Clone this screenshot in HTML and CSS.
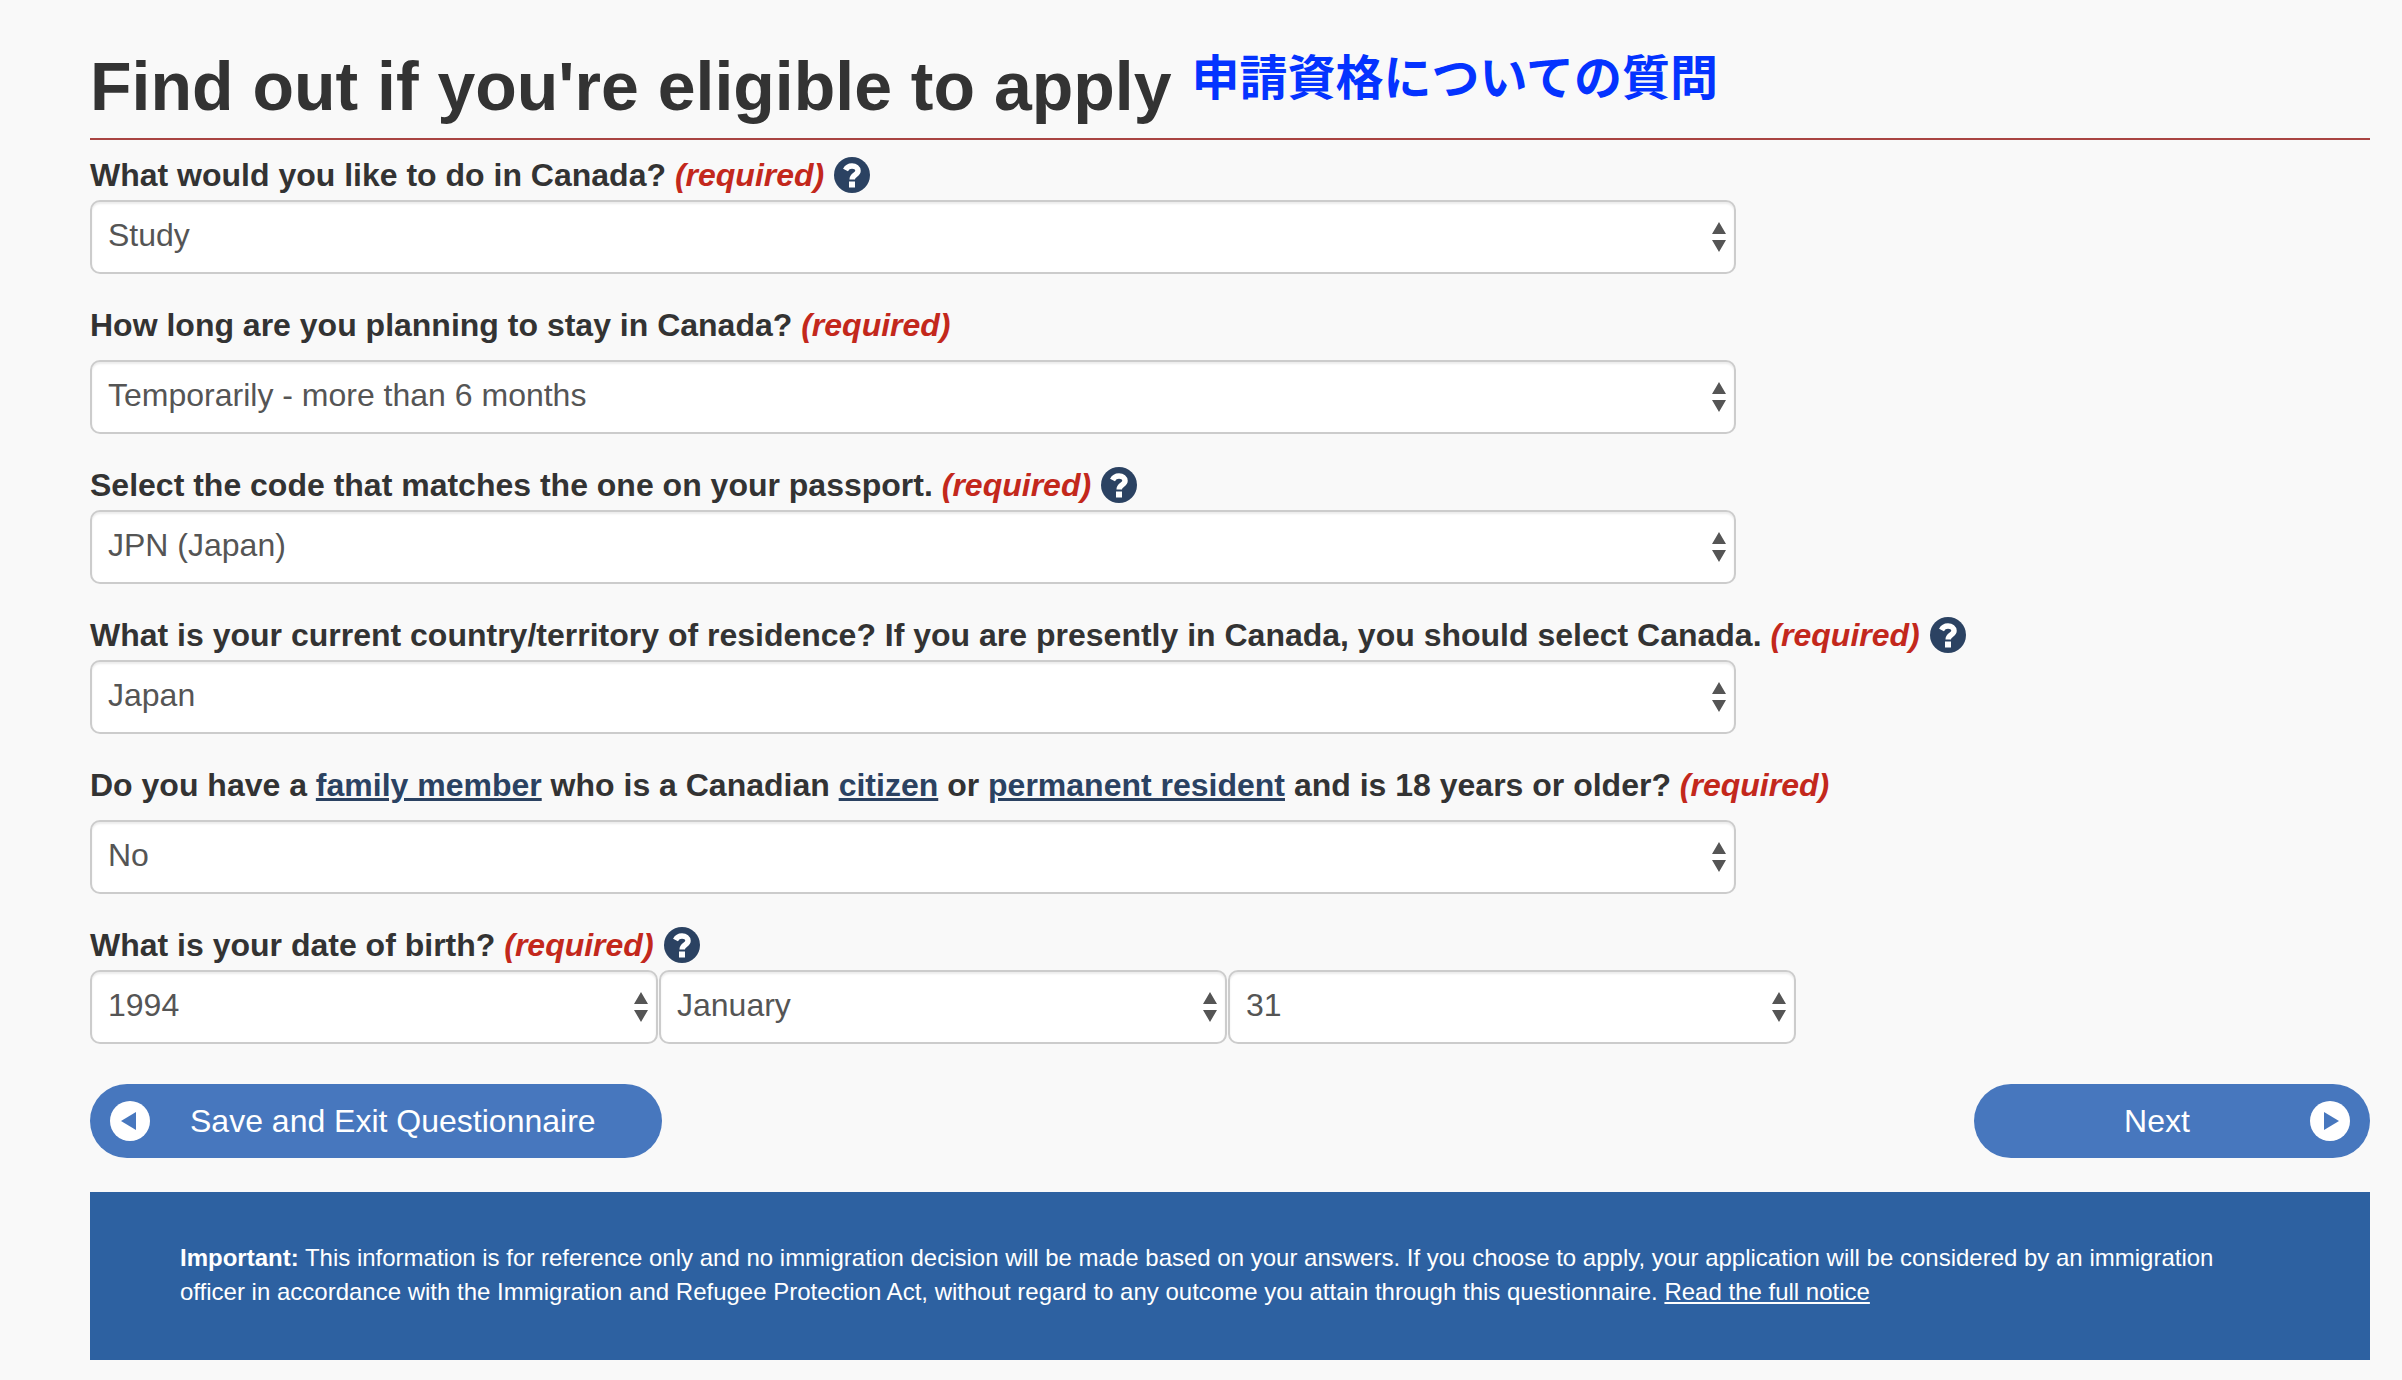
FILE: index.html
```html
<!doctype html>
<html lang="en">
  <head>
    <meta charset="UTF-8" />
    <meta name="viewport" content="width=device-width, initial-scale=1.0" />
    <title>Find out if you're eligible to apply</title>
    <link rel="stylesheet" href="styles.css">
  </head>
  <body>
    <!-- Question mark shared by the help buttons -->
    <svg class="sprite" aria-hidden="true">
      <symbol id="help" viewBox="0 0 36 36">
        <circle cx="18" cy="18" r="18" fill="#2b4262" />
        <path d="M11.500 13C13 10 15 9 18 9C21.500 9 24 11 24 13.800C24 18 18.200 17.500 18.200 22.500" fill="none" stroke="#fff" stroke-width="5.500" />
        <rect x="15" y="24.500" width="6" height="6" fill="#fff" />
      </symbol>
    </svg>

    <main class="page">
      <header class="page-header">
        <h1>Find out if you're eligible to apply</h1>
        <p class="translation" lang="ja">申請資格についての質問</p>
      </header>

      <form>
        <div class="field">
          <div class="label-row">
            <label for="purpose">What would you like to do in Canada? <em class="required">(required)</em></label>
            <button type="button" class="help" aria-label="Help"><svg><use href="#help" /></svg></button>
          </div>
          <select id="purpose"><option>Study</option></select>
        </div>

        <div class="field">
          <div class="label-row spaced">
            <label for="duration">How long are you planning to stay in Canada? <em class="required">(required)</em></label>
          </div>
          <select id="duration"><option>Temporarily - more than 6 months</option></select>
        </div>

        <div class="field">
          <div class="label-row">
            <label for="passport">Select the code that matches the one on your passport. <em class="required">(required)</em></label>
            <button type="button" class="help" aria-label="Help"><svg><use href="#help" /></svg></button>
          </div>
          <select id="passport"><option>JPN (Japan)</option></select>
        </div>

        <div class="field">
          <div class="label-row">
            <label for="residence">What is your current country/territory of residence? If you are presently in Canada, you should select Canada. <em class="required">(required)</em></label>
            <button type="button" class="help" aria-label="Help"><svg><use href="#help" /></svg></button>
          </div>
          <select id="residence"><option>Japan</option></select>
        </div>

        <div class="field">
          <div class="label-row spaced">
            <label for="family">Do you have a <a href="#">family member</a> who is a Canadian <a href="#">citizen</a> or <a href="#">permanent resident</a> and is 18 years or older? <em class="required">(required)</em></label>
          </div>
          <select id="family"><option>No</option></select>
        </div>

        <div class="field">
          <div class="label-row">
            <label for="year">What is your date of birth? <em class="required">(required)</em></label>
            <button type="button" class="help" aria-label="Help"><svg><use href="#help" /></svg></button>
          </div>
          <div class="date">
            <select id="year"><option>1994</option></select>
            <select aria-label="Month"><option>January</option></select>
            <select aria-label="Day"><option>31</option></select>
          </div>
        </div>

        <div class="actions">
          <button type="button" class="btn btn-save">
            <svg class="arrow" viewBox="0 0 40 40"><circle cx="20" cy="20" r="20" fill="#fff" /><path d="M11 20L26 11V29Z" fill="#4777be" /></svg>
            <span>Save and Exit Questionnaire</span>
          </button>
          <button type="submit" class="btn btn-next">
            <span>Next</span>
            <svg class="arrow" viewBox="0 0 40 40"><circle cx="20" cy="20" r="20" fill="#fff" /><path d="M29 20L14 11V29Z" fill="#4777be" /></svg>
          </button>
        </div>
      </form>

      <aside class="notice">
        <p><strong>Important:</strong> This information is for reference only and no immigration decision will be made based on your answers. If you choose to apply, your application will be considered by an immigration officer in accordance with the Immigration and Refugee Protection Act, without regard to any outcome you attain through this questionnaire. <a href="#">Read the full notice</a></p>
      </aside>
    </main>
  </body>
</html>
```

FILE: styles.css
```css
* {
  margin: 0;
  padding: 0;
  box-sizing: border-box;
}
body {
  background: #f9f9f9;
  color: #333;
  font-family: "Liberation Sans", Arial, sans-serif;
  font-size: 32px;
}
.sprite {
  display: none;
}
.page {
  padding: 44px 32px 20px 90px;
}
.page-header {
  display: flex;
  align-items: flex-start;
  gap: 20px;
  margin-bottom: 17px;
  padding-bottom: 10px;
  border-bottom: 2px solid #a94442;
}
h1 {
  font-size: 68px;
  line-height: 84px;
}
.translation {
  color: #0433ff;
  font-family: "Noto Sans CJK JP", sans-serif;
  font-size: 48px;
  font-weight: bold;
  line-height: 60px;
}

/* Fields */
.field {
  margin-bottom: 33px;
}
.label-row {
  display: flex;
  align-items: center;
  gap: 10px;
  margin-bottom: 7px;
  font-weight: bold;
  line-height: 36px;
}
.label-row.spaced {
  margin-bottom: 17px;
}
.label-row a {
  color: #2b4262;
}
.required {
  color: #c3281c;
}
.help {
  width: 36px;
  height: 36px;
  border: 0;
  background: none;
}
.help svg {
  display: block;
  width: 36px;
  height: 36px;
}
select {
  display: block;
  width: 100%;
  max-width: 1646px;
  height: 74px;
  padding: 0 40px 4px 16px;
  border: 2px solid #ccc;
  border-radius: 10px;
  background: #fff url("data:image/svg+xml,%3Csvg xmlns='http://www.w3.org/2000/svg' width='14' height='30' fill='%23555'%3E%3Cpath d='M7 0L14 12H0zM0 18H14L7 30z'/%3E%3C/svg%3E") no-repeat right 8px center;
  box-shadow: inset 0 2px 2px rgba(0, 0, 0, 0.08);
  color: #555;
  font: inherit;
  appearance: none;
}
.date {
  display: flex;
  gap: 1px;
  max-width: 1706px;
}

/* Buttons */
.actions {
  display: flex;
  justify-content: space-between;
  margin: 40px 0 34px;
}
.btn {
  display: flex;
  align-items: center;
  height: 74px;
  padding: 0 20px;
  border: 0;
  border-radius: 37px;
  background: #4777be;
  color: #fff;
  font: inherit;
}
.btn-save {
  gap: 40px;
  padding-right: 66px;
}
.btn-next {
  gap: 28px;
  min-width: 396px;
  padding-left: 58px;
}
.btn-next span {
  flex: 1;
}
.arrow {
  width: 40px;
  height: 40px;
}

.notice {
  padding: 49px 90px 51px;
  background: #2d61a1;
  color: #fff;
  font-size: 24px;
  line-height: 34px;
}
.notice a {
  color: inherit;
}
```
